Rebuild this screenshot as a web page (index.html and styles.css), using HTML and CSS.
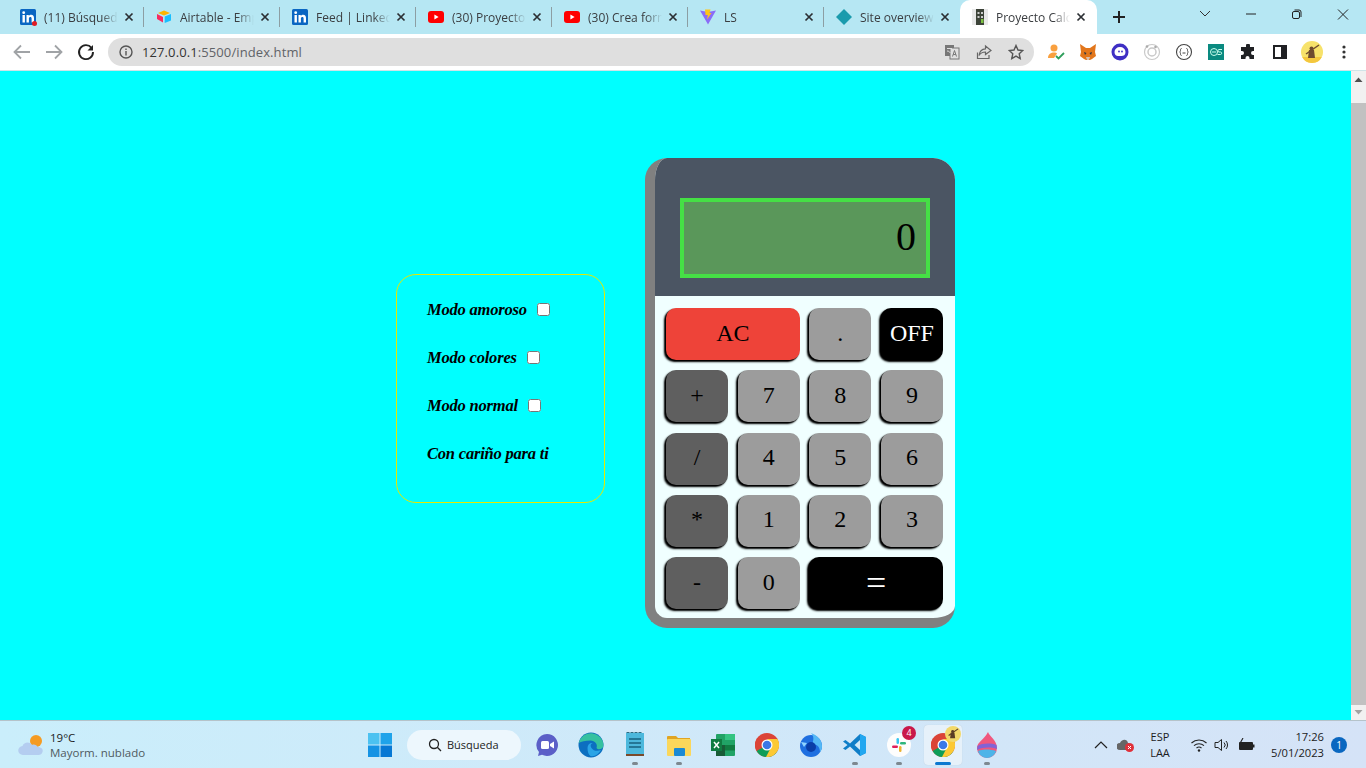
FILE: index.html
```html
<!DOCTYPE html>
<html lang="es">
<head>
<meta charset="utf-8">
<title>Proyecto Calculadora</title>
<link rel="stylesheet" href="styles.css">
</head>
<body>
<svg class="defs" width="0" height="0" aria-hidden="true">
  <symbol id="li" viewBox="0 0 16 16"><rect width="16" height="16" rx="1.5" fill="#0a66c2"/><rect x="2.5" y="6" width="2.4" height="7.5" fill="#fff"/><circle cx="3.7" cy="3.7" r="1.4" fill="#fff"/><path d="M6.5 6h2.3v1.1c.5-.8 1.3-1.3 2.4-1.3 2 0 2.8 1.3 2.8 3.4v4.3h-2.4V9.6c0-1-.3-1.7-1.2-1.7s-1.5.7-1.5 1.7v3.9H6.5z" fill="#fff"/></symbol>
  <symbol id="yt" viewBox="0 0 16 12"><rect width="16" height="12" rx="3" fill="#f00"/><path d="M6.4 3.6 10.6 6l-4.2 2.4z" fill="#fff"/></symbol>
  <symbol id="x" viewBox="0 0 10 10"><path d="M1.5 1.5l7 7M8.5 1.5l-7 7" stroke="#2b2f33" stroke-width="1.7" fill="none"/></symbol>
  <symbol id="chrome" viewBox="0 0 24 24"><circle cx="12" cy="12" r="12" fill="#db4437"/><path d="M12 12 1.6 18A12 12 0 0 1 2 5.4z" fill="#db4437"/><path d="M12 12 22.4 18A12 12 0 0 1 12 24 12 12 0 0 1 1.6 18z" fill="#0f9d58"/><path d="M12 6h10.4A12 12 0 0 1 22.4 18 12 12 0 0 1 11 24l6.200-12z" fill="#fcc934"/><circle cx="12" cy="12" r="5.500" fill="#fff"/><circle cx="12" cy="12" r="4.300" fill="#3b78e7"/></symbol>
</svg>

<header class="strip">
  <div class="tab sep"><svg class="fav" width="16" height="16"><use href="#li"/></svg><i class="dot"></i><span class="title">(11) Búsqueda de empleo</span><svg class="close" width="10" height="10"><use href="#x"/></svg></div>
  <div class="tab sep"><svg class="fav" width="16" height="16" viewBox="0 0 16 16"><path d="M8 1.500 14 4 8 6.500 2 4z" fill="#fcb400"/><path d="M8.700 7.500 15 5v6.500L8.700 14z" fill="#18bfff"/><path d="M1 5l6 3v5.500L1 10z" fill="#f82b60"/></svg><span class="title">Airtable - Empresa</span><svg class="close" width="10" height="10"><use href="#x"/></svg></div>
  <div class="tab sep"><svg class="fav" width="16" height="16"><use href="#li"/></svg><span class="title">Feed | LinkedIn inicio</span><svg class="close" width="10" height="10"><use href="#x"/></svg></div>
  <div class="tab sep"><svg class="fav" width="16" height="12"><use href="#yt"/></svg><span class="title">(30) Proyectos web</span><svg class="close" width="10" height="10"><use href="#x"/></svg></div>
  <div class="tab sep"><svg class="fav" width="16" height="12"><use href="#yt"/></svg><span class="title">(30) Crea formularios</span><svg class="close" width="10" height="10"><use href="#x"/></svg></div>
  <div class="tab sep"><svg class="fav" width="16" height="16" viewBox="0 0 16 16"><path d="M0 1.500 8 15.500 16 1.500 8 3z" fill="#8b6cf7"/><path d="M5 .5h5.500L9.500 4h2L7 10.500 7.800 6H5.500z" fill="#ffc517"/></svg><span class="title">LS</span><svg class="close" width="10" height="10"><use href="#x"/></svg></div>
  <div class="tab"><svg class="fav" width="16" height="16" viewBox="0 0 16 16"><path d="M8 0l8 8-8 8-8-8z" fill="#1a9bad"/></svg><span class="title">Site overview | Netlify</span><svg class="close" width="10" height="10"><use href="#x"/></svg></div>
  <div class="tab active"><svg class="fav" width="16" height="16" viewBox="0 0 16 16"><rect width="16" height="16" fill="#e8e8e8"/><rect x="4" y="0" width="8" height="16" fill="#3c4338"/><rect x="5.500" y="3" width="2" height="2" fill="#ccc"/><rect x="9" y="3" width="2" height="2" fill="#ccc"/><rect x="5.500" y="7" width="2" height="2" fill="#ccc"/><rect x="9" y="7" width="2" height="2" fill="#ccc"/><rect x="9" y="10" width="2.500" height="4" fill="#7cc142"/></svg><span class="title">Proyecto Calculadora</span><svg class="close" width="10" height="10"><use href="#x"/></svg></div>
  <svg class="newtab" width="14" height="14" viewBox="0 0 14 14"><path d="M7 1v12M1 7h12" stroke="#222" stroke-width="2"/></svg>
  <div class="winctl">
    <svg class="wc" width="46" height="28" viewBox="0 0 46 28"><path d="M18 11l5 5 5-5" stroke="#333" fill="none"/></svg>
    <svg class="wc" width="46" height="28" viewBox="0 0 46 28"><path d="M18 14h10" stroke="#222"/></svg>
    <svg class="wc" width="46" height="28" viewBox="0 0 46 28"><rect x="18.500" y="11.500" width="7" height="7" rx="1.500" stroke="#222" fill="none"/><path d="M20.500 10h4.500a2 2 0 0 1 2 2v5" stroke="#222" fill="none"/></svg>
    <svg class="wc" width="46" height="28" viewBox="0 0 46 28"><path d="M18 9.500l10 10M28 9.500l-10 10" stroke="#222" fill="none"/></svg>
  </div>
</header>

<nav class="toolbar">
  <svg class="navbtn" width="32" height="20" viewBox="0 0 32 20"><path d="M24 10H9M15 3.500 8.500 10l6.500 6.500" stroke="#a0a3a6" stroke-width="1.800" fill="none"/></svg>
  <svg class="navbtn" width="32" height="20" viewBox="0 0 32 20"><path d="M8 10h15M17 3.500l6.500 6.500-6.500 6.500" stroke="#a0a3a6" stroke-width="1.800" fill="none"/></svg>
  <svg class="navbtn" width="32" height="20" viewBox="0 0 32 20"><path d="M21.500 5.800A7 7 0 1 0 23 10" stroke="#222" stroke-width="1.900" fill="none"/><path d="M23 3v5.500h-5.500z" fill="#222"/></svg>
  <div class="omni">
    <svg class="info" width="14" height="14" viewBox="0 0 14 14"><circle cx="7" cy="7" r="6" stroke="#555" stroke-width="1.400" fill="none"/><path d="M7 6v4.500M7 3.500v1.500" stroke="#555" stroke-width="1.400"/></svg>
    <span class="url"><span class="host">127.0.0.1</span>:5500/index.html</span>
    <svg class="oicon" width="16" height="16" viewBox="0 0 16 16"><rect x="1" y="1" width="9" height="11" fill="#777"/><rect x="6" y="4" width="9" height="11" fill="#e0e0e0" stroke="#777"/><path d="M8.500 12.500l2-6 2 6M9.200 10.500h2.600" stroke="#777" fill="none"/><path d="M3 4.500h5M3 7c2 0 3 1 3 2" stroke="#e0e0e0" fill="none"/></svg>
    <svg class="oicon" width="16" height="16" viewBox="0 0 16 16"><path d="M1.500 8.500V14.500H13V11" stroke="#666" stroke-width="1.200" fill="none"/><path d="M9.500 2 15 6.500 9.500 10.500V8C6.500 8 4.500 9 3 11.500 3.500 7.500 6 5 9.500 4.800z" stroke="#666" stroke-width="1.200" fill="none"/></svg>
    <svg class="oicon" width="16" height="16" viewBox="0 0 16 16"><path d="M8 1.500l2 4.500 4.800.5-3.600 3.200 1 4.800L8 12.100l-4.200 2.400 1-4.800L1.200 6.500 6 6z" stroke="#555" stroke-width="1.400" fill="none"/></svg>
  </div>
  <div class="exts">
    <span class="ext"><svg width="18" height="18" viewBox="0 0 18 18"><circle cx="7" cy="5" r="3.500" fill="#f9a03f"/><path d="M1 15c0-4 3-5.500 6-5.500 1.500 0 2.500.4 3 1L7 15z" fill="#f9a03f"/><path d="M9 13l2.500 2.500L17 10" stroke="#2e9e5b" stroke-width="1.800" fill="none"/></svg></span>
    <span class="ext"><svg width="18" height="18" viewBox="0 0 18 18"><path d="M1 1l6 4h4l6-4-1 8 1 4-4 3-2 1H7l-2-1-4-3 1-4z" fill="#e2761b"/><path d="M5 9l2.500 1L6 12zM13 9l-2.500 1L12 12z" fill="#233447"/><path d="M7 14h4l-1 3H8z" fill="#d7c1b3"/></svg></span>
    <span class="ext"><svg width="18" height="18" viewBox="0 0 18 18"><circle cx="9" cy="9" r="8.500" fill="#3f2fc4"/><path d="M3.500 9a5.500 5 0 0 1 11 0c0 3-2 4-4 4H7c-2 0-3.500-1.500-3.500-4z" fill="#fff"/><circle cx="8" cy="8.500" r=".9" fill="#3f2fc4"/><circle cx="11" cy="8.500" r=".9" fill="#3f2fc4"/></svg></span>
    <span class="ext"><svg width="18" height="18" viewBox="0 0 18 18"><circle cx="9" cy="9" r="7.500" stroke="#c9c9c9" stroke-width="1.200" fill="none"/><circle cx="9" cy="9" r="4" stroke="#c9c9c9" stroke-width="1.500" fill="none"/><circle cx="12.500" cy="4" r="1.300" fill="#aaa"/><circle cx="4" cy="3.500" r="1.300" fill="#aaa"/></svg></span>
    <span class="ext"><svg width="18" height="18" viewBox="0 0 18 18"><circle cx="9" cy="9" r="7.500" stroke="#444" stroke-width="1.100" fill="none"/><path d="M6.500 5.500c-1 0-1 1-1 2s-.8 1.500-.8 1.500.8.500.8 1.500 0 2 1 2M11.500 5.500c1 0 1 1 1 2s.8 1.500.8 1.500-.8.500-.8 1.500 0 2-1 2M7.500 10h3" stroke="#444" fill="none"/></svg></span>
    <span class="ext"><svg width="16" height="16" viewBox="0 0 16 16"><rect width="16" height="16" fill="#0a8a80"/><circle cx="6" cy="8" r="3.500" stroke="#cfe" fill="none"/><path d="M4 8h4M14 5.500h-3c-1.500 0-1.500 2.500 0 2.500h1.500c1.500 0 1.500 2.500 0 2.500h-3" stroke="#cfe" fill="none"/></svg></span>
    <span class="ext"><svg width="16" height="16" viewBox="0 0 16 16"><path d="M6 1.500a2 2 0 0 1 4 0V3h4v4h-1a2 2 0 0 0 0 4h1v4H9.500v-1a2 2 0 0 0-4 0v1H1v-4h1a2 2 0 0 0 0-4H1V3h5z" fill="#202124"/></svg></span>
    <span class="ext"><svg width="14" height="14" viewBox="0 0 14 14"><rect x="1" y="1" width="12" height="12" fill="#fff" stroke="#202124" stroke-width="2"/><rect x="8" y="1" width="5" height="12" fill="#202124"/></svg></span>
    <span class="ext"><svg width="22" height="22" viewBox="0 0 22 22"><circle cx="11" cy="11" r="11" fill="#f7e26b"/><path d="M1.200 16h19.600a11 11 0 0 1-19.600 0z" fill="#f4c73e"/><path d="M8 9h5l1 8H7z" fill="#6e4a2f"/><path d="M5 13 18 4" stroke="#6e4a2f" stroke-width="1.500"/><circle cx="10.500" cy="7.500" r="2" fill="#6e4a2f"/></svg></span>
    <span class="ext"><svg width="4" height="14" viewBox="0 0 4 14"><circle cx="2" cy="2" r="1.600" fill="#333"/><circle cx="2" cy="7" r="1.600" fill="#333"/><circle cx="2" cy="12" r="1.600" fill="#333"/></svg></span>
  </div>
</nav>

<div class="viewport">
  <main class="page">
    <section class="menu">
      <label class="mode">Modo amoroso<input type="checkbox"></label>
      <label class="mode">Modo colores<input type="checkbox"></label>
      <label class="mode">Modo normal<input type="checkbox"></label>
      <p class="mode">Con cariño para ti</p>
    </section>
    <section class="calc">
      <div class="head"><output class="screen">0</output></div>
      <div class="keys">
        <button class="key red wide">AC</button>
        <button class="key">.</button>
        <button class="key dark">OFF</button>
        <button class="key op">+</button>
        <button class="key">7</button>
        <button class="key">8</button>
        <button class="key">9</button>
        <button class="key op">/</button>
        <button class="key">4</button>
        <button class="key">5</button>
        <button class="key">6</button>
        <button class="key op">*</button>
        <button class="key">1</button>
        <button class="key">2</button>
        <button class="key">3</button>
        <button class="key op">-</button>
        <button class="key">0</button>
        <button class="key dark wide equals">=</button>
      </div>
    </section>
  </main>
  <aside class="scrollbar">
    <svg class="sb-up" width="15" height="17" viewBox="0 0 15 17"><path d="M3.500 11 7.500 6.500 11.500 11z" fill="#505050"/></svg>
    <div class="thumb"></div>
    <svg class="sb-down" width="15" height="15" viewBox="0 0 15 15"><path d="M3.500 5 7.500 9.500 11.500 5z" fill="#a3a3a3"/></svg>
  </aside>
</div>

<footer class="taskbar">
  <div class="weather">
    <svg width="28" height="26" viewBox="0 0 28 26"><circle cx="18" cy="9" r="6" fill="#f59b23"/><path d="M5 23a4.500 4.500 0 0 1-.5-9c1-3.500 7-5 9.500-1 2-1 5 0 5.500 2 4 0 6 2.500 5 5-.5 2-2 3-4 3z" fill="#b4cdf0"/></svg>
    <div class="wtext"><span class="temp">19°C</span><span class="sky">Mayorm. nublado</span></div>
  </div>
  <svg class="start" width="24" height="24" viewBox="0 0 24 24"><rect width="11.500" height="11.500" fill="#4cc2f1"/><rect x="12.500" width="11.500" height="11.500" fill="#1fa3ea"/><rect y="12.500" width="11.500" height="11.500" fill="#1593e4"/><rect x="12.500" y="12.500" width="11.500" height="11.500" fill="#0778d4"/></svg>
  <div class="search"><svg width="14" height="14" viewBox="0 0 14 14"><circle cx="6" cy="6" r="4.500" stroke="#222" stroke-width="1.300" fill="none"/><path d="M9.300 9.300 13 13" stroke="#222" stroke-width="1.300"/></svg><span>Búsqueda</span></div>
  <div class="apps">
    <div class="app"><svg width="24" height="24" viewBox="0 0 24 24"><path d="M12 1a11 11 0 1 1-5 20.800L3 23l1-4A11 11 0 0 1 12 1z" fill="#5b5fc7"/><rect x="6" y="8" width="8" height="8" rx="1.500" fill="#fff"/><path d="M15 11l4-2.500v7L15 13z" fill="#fff"/></svg></div>
    <div class="app"><svg width="26" height="26" viewBox="0 0 26 26"><circle cx="13" cy="13" r="12.500" fill="#0c6fc0"/><path d="M.8 11A12.500 12.500 0 0 1 25.500 13c0 4.500-5.500 5.500-7 3 1.500-3.500-1.500-7.500-6-7.500-5 0-9.500 1-11.700 2.500z" fill="#35c1a0"/><path d="M9.500 16c0-3.500 2.500-5.500 5.500-5-2.500.5-3 3-1.500 5 2 3 6 3.500 9.500 2-2.500 4.500-6.500 7-10.500 6-2-1-3-4.500-3-8z" fill="#2aa4e6"/></svg></div>
    <div class="app"><svg width="20" height="26" viewBox="0 0 20 26"><rect x="1" y="1" width="18" height="21" fill="#4cb8dc"/><path d="M3 1V0M7 1V0M11 1V0M15 1V0" stroke="#2d6a80" stroke-width="3"/><path d="M4 7h12M4 11h12M4 15h12" stroke="#17617f" stroke-width="1.300"/><rect x="1" y="22" width="18" height="2" fill="#7a4a2b"/></svg><i class="pip"></i></div>
    <div class="app"><svg width="24" height="22" viewBox="0 0 24 22"><path d="M0 3a1 1 0 0 1 1-1h8l2 2h12v4H0z" fill="#e0a422"/><rect y="5" width="24" height="17" rx="1" fill="#fbd75b"/><rect x="7" y="14" width="11" height="8" rx="1" fill="#1a8ad4"/></svg><i class="pip"></i></div>
    <div class="app"><svg width="24" height="22" viewBox="0 0 24 22"><rect x="5" width="19" height="22" rx="1" fill="#21a366"/><rect x="14" y="0" width="10" height="6" fill="#33c481"/><rect x="14" y="11" width="10" height="5.500" fill="#107c41"/><rect x="5" y="11" width="9" height="11" fill="#185c37"/><rect y="5" width="11" height="12" fill="#107c41"/><path d="M3 8l5 6M8 8l-5 6" stroke="#fff" stroke-width="1.500"/></svg></div>
    <div class="app"><svg width="24" height="24"><use href="#chrome"/></svg></div>
    <div class="app"><svg width="24" height="24" viewBox="0 0 24 24"><circle cx="12" cy="13" r="11" fill="#1f6fe0"/><path d="M12 0c6 2 11 7 11 13 0 3-1 5-2 6 0-6-4-8-8-8C15 7 15 3 12 0z" fill="#55b8f5"/><circle cx="12" cy="14" r="5" fill="#0a3ea8"/><path d="M2 9l6 1-3 4z" fill="#8fd3ff"/></svg></div>
    <div class="app"><svg width="24" height="24" viewBox="0 0 24 24"><path d="M17 1l6 3v16l-6 3L7 13.500 2.500 17 0 15.500 4.500 12 0 8.500 2.500 7 7 10.500z" fill="#0f7ec8"/><path d="M17 1l6 3v16l-6 3z" fill="#22a7f0"/><path d="M17 7l-5.500 5 5.500 5z" fill="#cfeaf9"/></svg><i class="pip"></i></div>
    <div class="app"><svg width="24" height="24" viewBox="0 0 24 24"><circle cx="12" cy="12" r="12" fill="#fdfdfd"/><rect x="9.500" y="5" width="2.500" height="6" rx="1.250" fill="#36c5f0"/><rect x="13" y="9" width="6" height="2.500" rx="1.250" fill="#2eb67d"/><rect x="12" y="13" width="2.500" height="6" rx="1.250" fill="#ecb22e"/><rect x="5" y="12.500" width="6" height="2.500" rx="1.250" fill="#e01e5a"/></svg><b class="badge">4</b><i class="pip"></i></div>
    <div class="app current"><svg width="24" height="24"><use href="#chrome"/></svg><svg class="mini" width="16" height="16" viewBox="0 0 22 22"><circle cx="11" cy="11" r="11" fill="#f2d96a"/><path d="M8 9h5l1 8H7z" fill="#5a3c25"/><path d="M5 13 18 4" stroke="#5a3c25" stroke-width="1.500"/><circle cx="10.500" cy="7.500" r="2" fill="#5a3c25"/></svg><i class="bar"></i></div>
    <div class="app"><svg width="20" height="26" viewBox="0 0 20 26"><path d="M11 0c1 4 9 8 9 16a10 10 0 0 1-20 0C0 10 7 8 11 0z" fill="#f0577e"/><path d="M.5 14c5-3 13-3 19-1l.5 4c-6-2-14-2-20 1z" fill="#8263d6"/><path d="M1 19c5-2 12-2 18 0-1 4-5 7-9 7s-8-3-9-7z" fill="#4db4e8"/></svg><i class="pip"></i></div>
  </div>
  <div class="tray">
    <svg class="t-chev" width="14" height="8" viewBox="0 0 14 8"><path d="M1 7l6-6 6 6" stroke="#222" stroke-width="1.200" fill="none"/></svg>
    <svg class="t-cloud" width="18" height="16" viewBox="0 0 18 16"><path d="M3 13a3.500 3.500 0 0 1 0-7c1-3.500 7-5 8 0h1v7z" fill="#666"/><circle cx="12.500" cy="10.500" r="4.500" fill="#e0303a"/><path d="M11 9l3 3M14 9l-3 3" stroke="#fff"/></svg>
    <div class="lang"><span>ESP</span><span>LAA</span></div>
    <svg class="t-wifi" width="16" height="14" viewBox="0 0 16 14"><path d="M.5 5a11 11 0 0 1 15 0M3 7.700a7.500 7.500 0 0 1 10 0M5.500 10a4 4 0 0 1 5 0" stroke="#222" stroke-width="1.100" fill="none"/><circle cx="8" cy="12.500" r="1.200" fill="#222"/></svg>
    <svg class="t-vol" width="16" height="14" viewBox="0 0 16 14"><path d="M1 4.500h3L7.500 1.500v11L4 9.500H1z" stroke="#222" fill="none"/><path d="M10 4.500a3.500 3.500 0 0 1 0 5M12 3a6 6 0 0 1 0 8" stroke="#222" fill="none"/></svg>
    <svg class="t-bat" width="17" height="13" viewBox="0 0 17 13"><rect x="1" y="4" width="14" height="8" rx="1" fill="#222"/><rect x="15" y="6.500" width="1.500" height="3" fill="#222"/><path d="M5 0 2.500 4.500H6L3 9" stroke="#222" stroke-width="1.100" fill="none"/></svg>
    <div class="clock"><span>17:26</span><span>5/01/2023</span></div>
    <b class="notif">1</b>
  </div>
</footer>
</body>
</html>
```

FILE: styles.css
```css
* { box-sizing: border-box; }

html, body {
  margin: 0;
  height: 100%;
  overflow: hidden;
}

body {
  width: 1366px;
  height: 768px;
  display: flex;
  flex-direction: column;
  font-family: "Open Sans", "Noto Sans", sans-serif;
  background: #0ff;
}

.defs { display: block; height: 0; }

/* Tab strip */
.strip {
  flex: 0 0 34px;
  display: flex;
  align-items: stretch;
  padding-left: 8px;
  background: #b6e7f3;
}

.tab {
  position: relative;
  flex: 0 0 136px;
  display: flex;
  align-items: center;
  padding-left: 12px;
  font-size: 12px;
  color: #3a3d40;
}

.tab.sep::after {
  content: "";
  position: absolute;
  right: 0;
  top: 7px;
  height: 20px;
  width: 1px;
  background: #8c9ea3;
}

.tab.active {
  flex-basis: 137px;
  background: #fff;
  border-radius: 10px 10px 0 0;
  margin-right: 15px;
}

.fav { flex: 0 0 16px; }

.dot {
  position: absolute;
  left: 24px;
  top: 21px;
  width: 5px;
  height: 5px;
  border-radius: 50%;
  background: #e01b24;
}

.title {
  flex: 0 0 74px;
  margin-left: 8px;
  white-space: nowrap;
  overflow: hidden;
  -webkit-mask-image: linear-gradient(90deg, #000 78%, transparent 100%);
  mask-image: linear-gradient(90deg, #000 78%, transparent 100%);
}

.close { margin-left: 6px; flex: 0 0 10px; }

.newtab { align-self: center; }

.winctl {
  margin-left: auto;
  display: flex;
  align-items: flex-start;
}

.wc { display: block; }

/* Toolbar */
.toolbar {
  flex: 0 0 37px;
  display: flex;
  align-items: center;
  padding: 0 0 1px 6px;
  background: #fff;
  border-bottom: 1px solid #cfe4e8;
}

.navbtn { flex: 0 0 32px; }

.omni {
  flex: 0 0 926px;
  height: 28px;
  margin-left: 6px;
  display: flex;
  align-items: center;
  padding: 0 10px 0 11px;
  border-radius: 14px;
  background: #dfdfdf;
}

.url {
  margin-left: 9px;
  font-size: 13px;
  letter-spacing: .1px;
  color: #5f6368;
  flex: 1;
}

.host { color: #333; }

.oicon { margin-left: 16px; }

.exts {
  flex: 1;
  display: flex;
  align-items: center;
  padding-left: 6px;
}

.ext {
  flex: 0 0 32px;
  display: flex;
  align-items: center;
  justify-content: center;
}

/* Page viewport */
.viewport {
  flex: 1;
  min-height: 0;
  display: flex;
}

.page {
  flex: 1;
  display: flex;
  justify-content: center;
  align-items: center;
  gap: 40px;
  height: 460px;
  margin-top: 87px;
  background: #0ff;
}

.menu {
  width: 209px;
  height: 229px;
  display: flex;
  flex-direction: column;
  padding: 11px 0 0 30px;
  border: 1px solid #e8e800;
  border-radius: 20px;
  color: #000;
}

.mode {
  display: flex;
  align-items: center;
  height: 48px;
  margin: 0;
  font-family: "Liberation Serif", cursive;
  font-style: italic;
  font-weight: 700;
  font-size: 16.5px;
  letter-spacing: -.2px;
}

.mode input {
  width: 13px;
  height: 13px;
  margin: 0 0 0 10px;
}

.calc {
  align-self: flex-start;
  width: 310px;
  height: 470px;
  display: flex;
  flex-direction: column;
  overflow: hidden;
  border-left: 10px solid #808080;
  border-bottom: 10px solid #808080;
  border-radius: 22px;
  background: azure;
}

.head {
  flex: 0 0 138px;
  padding: 40px 25px 0;
  background: #4b5563;
}

.screen {
  display: block;
  height: 80px;
  padding-right: 10px;
  border: 4px solid #45e045;
  background: #5a975a;
  font: 40px/70px "Liberation Serif", serif;
  text-align: right;
  color: #000;
}

.keys {
  flex: 1;
  display: grid;
  grid-template-columns: repeat(4, 1fr);
  grid-auto-rows: 52px;
  gap: 10.25px 9.4px;
  padding: 12px 12px 0 11px;
}

.key {
  padding: 0 0 2px;
  border: 0;
  border-radius: 10px;
  background: #9c9c9c;
  box-shadow: -2px 2px 2px #000, -1px 1px 1px #000;
  font: 24px "Liberation Serif", serif;
  color: #000;
}

.wide { grid-column: span 2; }
.op { background: #5f5f5f; }
.red { background: #ee4339; }
.dark { background: #000; color: #fff; }
.equals { font-size: 36px; line-height: 36px; padding-bottom: 0; }

/* Scrollbar */
.scrollbar {
  flex: 0 0 15px;
  display: flex;
  flex-direction: column;
  background: #f1f1f1;
}

.sb-up, .sb-down { flex: none; }

.thumb {
  flex: 1;
  margin: 15px 0 0;
  background: #c1c1c1;
}

/* Taskbar */
.taskbar {
  flex: 0 0 48px;
  display: flex;
  align-items: center;
  border-top: 1px solid #b5c3ca;
  background: linear-gradient(90deg, #caeefb, #d5e3f7);
  color: #1c1c1c;
  font-size: 11px;
}

.weather {
  flex: 0 0 368px;
  display: flex;
  align-items: center;
  gap: 4px;
  padding-left: 18px;
}

.wtext { display: flex; flex-direction: column; line-height: 15px; font-size: 11.5px; }
.sky { color: #4f5a60; }

.start { flex: none; }

.search {
  flex: 0 0 114px;
  height: 30px;
  margin-left: 15px;
  display: flex;
  align-items: center;
  gap: 5px;
  padding-left: 21px;
  border-radius: 15px;
  background: #edf7fd;
}

.apps {
  display: flex;
  margin-left: 4px;
}

.app {
  position: relative;
  flex: 0 0 44px;
  height: 40px;
  display: flex;
  align-items: center;
  justify-content: center;
  border-radius: 4px;
}

.app.current { background: #e6f1fa; flex-basis: 38px; margin: 0 3px; box-shadow: 0 0 1px #b9c9d6; }

.pip {
  position: absolute;
  left: 19px;
  bottom: 0;
  width: 6px;
  height: 3px;
  border-radius: 2px;
  background: #7d8890;
}

.bar {
  position: absolute;
  left: 11px;
  bottom: 0;
  width: 16px;
  height: 3px;
  border-radius: 2px;
  background: #0b78d0;
}

.badge {
  position: absolute;
  right: 5px;
  top: 1px;
  width: 14px;
  height: 14px;
  border-radius: 50%;
  background: #c9184a;
  color: #fff;
  font-size: 9px;
  font-weight: 400;
  line-height: 14px;
  text-align: center;
}

.mini { position: absolute; right: 1px; top: 1px; }

.tray {
  flex: 1;
  display: flex;
  align-items: center;
  padding-left: 85px;
}

.t-chev { flex: none; }
.t-cloud { flex: none; margin-left: 9px; }

.lang {
  flex: 0 0 44px;
  margin-left: 3px;
  display: flex;
  flex-direction: column;
  align-items: center;
  line-height: 16px;
  font-size: 11px;
}

.t-wifi { flex: none; margin-left: 9px; }
.t-vol { flex: none; margin-left: 7px; }
.t-bat { flex: none; margin-left: 8px; }

.clock {
  flex: 0 0 69px;
  display: flex;
  flex-direction: column;
  align-items: flex-end;
  line-height: 16px;
  font-size: 11.2px;
}

.notif {
  margin-left: 7px;
  width: 16px;
  height: 16px;
  border-radius: 50%;
  background: #0a67c0;
  color: #fff;
  font-size: 10px;
  font-weight: 400;
  line-height: 16px;
  text-align: center;
}
```
